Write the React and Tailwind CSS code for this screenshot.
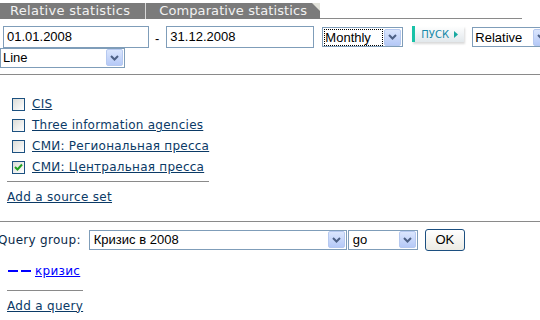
import React from "react";

const verdana = { fontFamily: '"DejaVu Sans", Verdana, sans-serif' };

function Arrow() {
  return (
    <span className="flex h-[17px] w-[17px] shrink-0 items-center justify-center rounded-[2px] border border-[#b6c9f0] bg-gradient-to-b from-[#dbe6fd] to-[#b5c9f7]">
      <svg width="9" height="6" viewBox="0 0 9 6">
        <path d="M1 1 L4.5 4.5 L8 1" fill="none" stroke="#4d6185" strokeWidth="2" />
      </svg>
    </span>
  );
}

function Select({ value, className, focused }) {
  return (
    <div className={"flex h-[20px] shrink-0 items-center border border-[#7f9db9] bg-white pl-[2px] pr-[1px] text-[13px] text-black " + className}>
      <span className={"flex-1 leading-[15px] " + (focused ? "outline outline-1 outline-dotted outline-black mr-[2px]" : "")}>{value}</span>
      <Arrow />
    </div>
  );
}

function Check({ checked, label }) {
  return (
    <div className="flex h-[21px] items-center">
      <span className="ml-[12px] flex h-[13px] w-[13px] items-center justify-center border border-[#1c5180] bg-gradient-to-br from-[#dcdcd7] to-white">
        {checked && (
          <svg width="9" height="8" viewBox="0 0 9 8">
            <path d="M1 4 L3.5 6.5 L8 1.5" fill="none" stroke="#21a121" strokeWidth="2" />
          </svg>
        )}
      </span>
      <a className="ml-[7px] text-[12px] tracking-[0.25px] text-[#0b3a66] underline" style={verdana}>{label}</a>
    </div>
  );
}

export default function App() {
  return (
    <div className="h-[320px] w-[540px] overflow-hidden bg-white" style={{ fontFamily: '"Liberation Sans", Arial, sans-serif' }}>
      <div className="mt-[3px] flex items-end" style={verdana}>
        <div className="flex h-[16px] shrink-0 items-center bg-[#7b7b7b] pl-[10px] pr-[15px] text-[13px] tracking-[0.3px] text-[#f2f2f2]">
          Relative statistics
        </div>
        <div className="h-[16px] w-px shrink-0 bg-[#d8d8d8]" />
        <div className="relative flex h-[16px] shrink-0 items-center bg-[#7b7b7b] pl-[13px] pr-[13px] text-[13px] tracking-[0.1px] text-[#f2f2f2]">
          Comparative statistics
          <svg className="absolute right-0 top-0" width="8" height="8" viewBox="0 0 8 8">
            <polygon points="0,0 8,0 8,8" fill="#e2e2da" />
          </svg>
        </div>
        <div className="h-px w-[202px] shrink-0 bg-[#8a8a8a]" />
      </div>

      <div className="mt-[7px] flex items-start">
        <div className="ml-[3px] flex h-[22px] w-[146px] shrink-0 items-center border border-[#7f9db9] pl-[3px] text-[13px]">01.01.2008</div>
        <span className="ml-[6px] mt-[3px] shrink-0 text-[13px]">-</span>
        <div className="ml-[7px] flex h-[22px] w-[148px] shrink-0 items-center border border-[#7f9db9] pl-[3px] text-[13px]">31.12.2008</div>
        <Select value="Monthly" className="ml-[8px] mt-[1px] w-[81px]" focused />
        <div className="ml-[9px] flex h-[16px] w-[52px] shrink-0 items-center border-l-[3px] border-[#19c2a8] bg-gradient-to-b from-white to-[#e2e8ec] pl-[6px] text-[10px] text-[#1688a8] shadow-[1px_2px_2px_rgba(0,0,0,0.15)]" style={verdana}>
          ПУСК
          <svg className="ml-[5px]" width="4" height="7" viewBox="0 0 4 7">
            <polygon points="0,0 4,3.5 0,7" fill="#17a8a0" />
          </svg>
        </div>
        <Select value="Relative" className="ml-[8px] mt-[1px] w-[80px]" />
      </div>

      <Select value="Line" className="w-[125px] -mt-[1px]" />

      <div className="mt-[6px] h-px w-full bg-[#8a8a8a]" />

      <div className="mt-[19px] flex flex-col">
        <Check label="CIS" />
        <Check label="Three information agencies" />
        <Check label="СМИ: Региональная пресса" />
        <Check checked label="СМИ: Центральная пресса" />
      </div>

      <div className="ml-[7px] mt-[3px] h-px w-[202px] bg-[#8a8a8a]" />
      <a className="ml-[7px] mt-[6px] block text-[12px] tracking-[0.3px] text-[#0b3a66] underline" style={verdana}>Add a source set</a>

      <div className="mt-[15px] h-px w-full bg-[#8a8a8a]" />

      <div className="mt-[7px] flex items-center">
        <span className="-ml-[2px] text-[12px] tracking-[0.3px] text-[#0b2a4a]" style={verdana}>Query group:</span>
        <div className="ml-[8px] flex h-[20px] w-[258px] shrink-0 items-center border border-[#7f9db9] pl-[4px] pr-[1px] text-[13px]">
          <span className="flex-1">Кризис в 2008</span>
          <Arrow />
        </div>
        <div className="ml-[1px] flex h-[20px] w-[70px] shrink-0 items-center border border-[#7f9db9] pl-[4px] pr-[1px] text-[13px]">
          <span className="flex-1">go</span>
          <Arrow />
        </div>
        <button className="ml-[7px] flex h-[22px] w-[40px] shrink-0 items-center justify-center rounded-[3px] border border-[#1c4f80] bg-gradient-to-b from-white to-[#ecebe4] text-[13px]">OK</button>
      </div>

      <div className="ml-[8px] mt-[11px] flex items-center" style={verdana}>
        <span className="flex gap-[3px]">
          <span className="h-[2px] w-[10px] bg-[#0000ff]" />
          <span className="h-[2px] w-[10px] bg-[#0000ff]" />
        </span>
        <a className="ml-[4px] text-[12px] tracking-[0.3px] text-[#0000ff] underline">кризис</a>
      </div>

      <div className="ml-[7px] mt-[10px] h-px w-[76px] bg-[#8a8a8a]" />
      <a className="ml-[7px] mt-[6px] block text-[12px] tracking-[0.3px] text-[#0b3a66] underline" style={verdana}>Add a query</a>
    </div>
  );
}
